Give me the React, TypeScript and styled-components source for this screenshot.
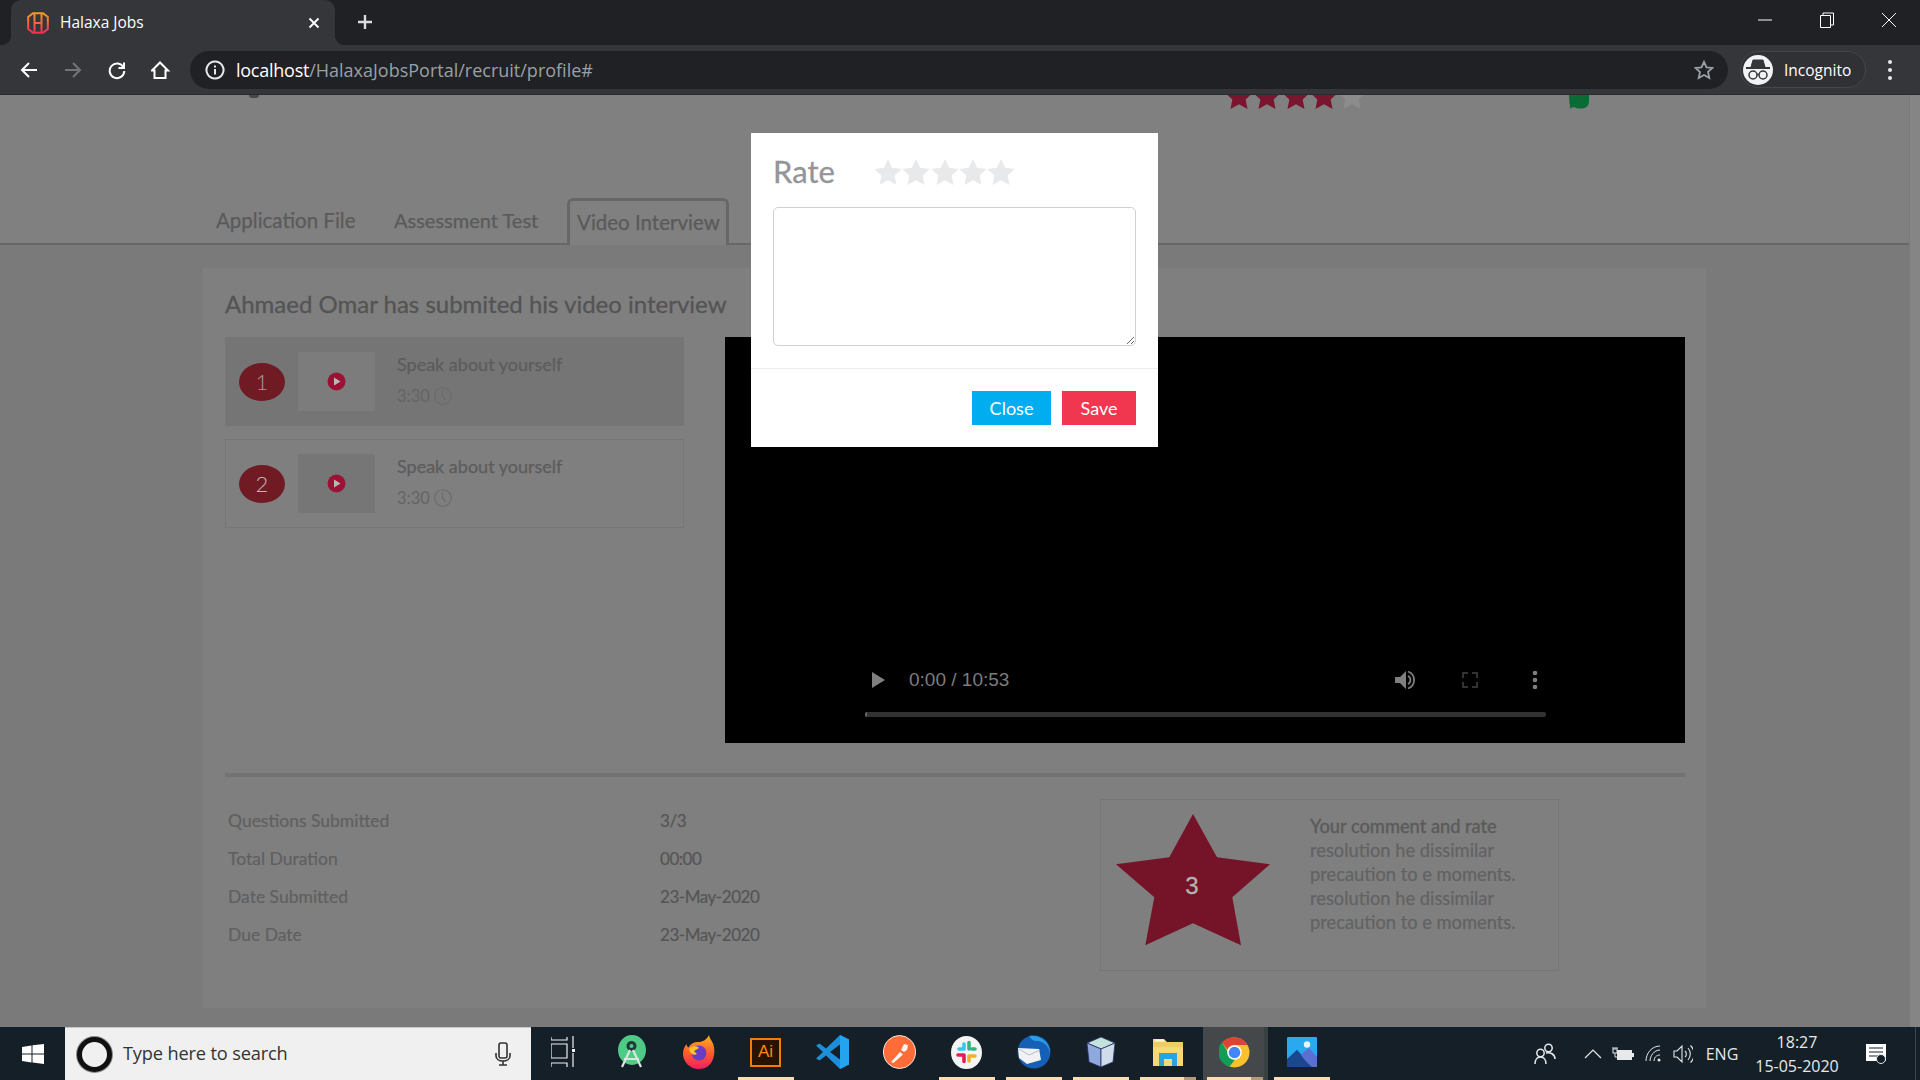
import React from "react";
import styled, { createGlobalStyle } from "styled-components";

const Global = createGlobalStyle`
  html, body { margin: 0; padding: 0; background: #808080; overflow: hidden; }
  * { box-sizing: border-box; }
`;

const BODY = `"Lato", "Open Sans", sans-serif`;
const UI = `"Open Sans", "Noto Sans", sans-serif`;

const Screen = styled.div`
  width: 1920px; height: 1080px; display: flex; flex-direction: column; overflow: hidden; font-family: ${BODY};
`;

/* ---------- browser chrome ---------- */
const TabStrip = styled.div`
  height: 45px; background: #202124; display: flex; align-items: stretch; padding-left: 11px; flex: none;
`;
const Tab = styled.div`
  position: relative; width: 324px; background: #35363a; border-radius: 10px 10px 0 0;
  display: flex; align-items: center; padding-left: 16px; gap: 11px;
  font: 15.5px ${UI}; color: #fff;
  &::before, &::after { content: ""; position: absolute; bottom: 0; width: 10px; height: 10px; }
  &::before { left: -10px; background: radial-gradient(circle at 0 0, #202124 10px, #35363a 10.5px); }
  &::after { right: -10px; background: radial-gradient(circle at 100% 0, #202124 10px, #35363a 10.5px); }
`;
const TabTitle = styled.span`flex: 1; padding-bottom: 2px;`;
const TabClose = styled.div`width: 42px; display: flex; justify-content: center; margin-right: 0;`;
const NewTab = styled.div`width: 60px; display: flex; align-items: center; justify-content: center; padding-bottom: 2px;`;
const WindowControls = styled.div`margin-left: auto; display: flex;`;
const WindowButton = styled.div`width: 62px; display: flex; align-items: center; justify-content: center; padding-bottom: 6px;`;

const Toolbar = styled.div`
  height: 50px; background: #35363a; display: flex; align-items: center; padding-left: 7px; flex: none;
  border-bottom: 1px solid #2b2b2b;
`;
const NavButton = styled.div`width: 44px; height: 40px; display: flex; align-items: center; justify-content: center;`;
const Omnibox = styled.div`
  width: 1538px; height: 38px; margin-left: 7px; background: #202124; border-radius: 19px;
  display: flex; align-items: center; padding: 0 14px 0 15px; gap: 11px; font: 18px ${UI}; color: #9aa0a6;
`;
const UrlHost = styled.span`color: #fff; letter-spacing: -0.25px;`;
const Url = styled.div`flex: 1;`;
const Incognito = styled.div`
  width: 126px; height: 37px; margin-left: 12px; border-radius: 19px; background: #303135; border: 1px solid #45464a;
  display: flex; align-items: center; padding-left: 2px; gap: 11px; font: 15.500px ${UI}; color: #fff;
`;
const Avatar = styled.div`
  width: 30px; height: 30px; border-radius: 50%; background: #f1f3f4; display: flex; align-items: center; justify-content: center;
`;
const MenuButton = styled.div`width: 48px; display: flex; justify-content: center;`;

/* ---------- page ---------- */
const Viewport = styled.div`flex: 1; position: relative; overflow: hidden; display: flex; min-height: 0; background: #808080;`;
const PageMain = styled.div`flex: 1; display: flex; flex-direction: column; min-width: 0;`;
const ScrollTrack = styled.div`width: 11px; background: #858585; border-left: 1px solid #7a7a7a;`;

const PeekRow = styled.div`height: 15px; padding-left: 249px; display: flex; overflow: hidden; flex: none;`;
const PeekDot = styled.div`width: 10px; height: 3px; border-radius: 0 0 5px 5px; background: #484848;`;
const PeekStars = styled.div`display: flex; margin-left: 966px; align-self: flex-end; gap: 0.3px; align-items: flex-end; height: 15px;`;
const PeekBubble = styled.div`margin-left: 203px; align-self: flex-start; display: flex;`;

const TabBar = styled.div`
  height: 135px; flex: none; border-bottom: 2px solid #676767; padding-left: 216px; display: flex; align-items: flex-end;
  font-size: 20.5px; color: #5a5a5a; -webkit-text-stroke: 0.25px #5a5a5a;
`;
const PlainTab = styled.div<{ $w: number; $size?: number }>`
  width: ${(p) => p.$w}px; padding-bottom: 11px; white-space: nowrap; font-size: ${(p) => p.$size ?? 20.5}px;
`;
const ActiveTab = styled.div`
  width: 162px; height: 47px; margin-bottom: -2px; border: 3px solid #676767; border-bottom: 0; border-radius: 6px 6px 0 0;
  padding-left: 7px; padding-top: 9px; white-space: nowrap; background: #808080; color: #5a5a5a;
`;

const Body = styled.div`flex: 1; background: #7a7a7a; padding: 23px 203px 19px; min-height: 0;`;
const Panel = styled.div`height: 740px; background: #7f7f7f; padding: 20px 21px 0 22px;`;
const Heading = styled.h2`
  margin: 0 0 17px; font-weight: 400; height: 32px; line-height: 32px; font-size: 24px; color: #545454; white-space: nowrap;
  -webkit-text-stroke: 0.3px #545454;
`;
const TopRow = styled.div`display: flex; justify-content: space-between; align-items: flex-start;`;
const QuestionList = styled.div`width: 459px; display: flex; flex-direction: column; gap: 13px;`;
const Question = styled.div<{ $active?: boolean }>`
  height: 89px; display: flex; align-items: center; padding-left: 13px;
  background: ${(p) => (p.$active ? "#757575" : "transparent")};
  border: 1px solid ${(p) => (p.$active ? "#757575" : "#767676")};
`;
const NumberBadge = styled.div<{ $active?: boolean }>`
  width: 46px; height: 38px; border-radius: 50%; background: #701a23; flex: none;
  display: flex; align-items: center; justify-content: center; font-size: 22px; font-weight: 300;
  color: ${(p) => (p.$active ? "#a89a9a" : "#c2b5b5")};
`;
const Thumb = styled.div<{ $active?: boolean }>`
  width: 77px; height: 59px; margin-left: 13px; flex: none; display: flex; align-items: center; justify-content: center;
  background: ${(p) => (p.$active ? "#7c7c7c" : "#767676")};
`;
const QuestionText = styled.div`margin-left: 22px; padding-bottom: 6px; display: flex; flex-direction: column; gap: 10px;`;
const QuestionTitle = styled.div`font-size: 18px; line-height: 24px; color: #5c5c5c; -webkit-text-stroke: 0.25px #5c5c5c;`;
const QuestionTime = styled.div`display: flex; align-items: center; gap: 4px; font-size: 16.5px; line-height: 20px; color: #646464;`;

const Video = styled.div`
  width: 960px; height: 406px; background: #000; display: flex; flex-direction: column; justify-content: flex-end;
  padding: 0 139px 26px 140px;
`;
const VideoControls = styled.div`height: 30px; margin-bottom: 17px; display: flex; align-items: center; padding-left: 7px;`;
const VideoTime = styled.div`margin-left: 24px; font: 19px "Liberation Sans", sans-serif; color: #7c7c7c;`;
const VideoRight = styled.div`margin-left: auto; display: flex; gap: 43px; align-items: center;`;
const VideoTrack = styled.div`height: 5px; background: #333; border-radius: 2px; border-left: 2px solid #666;`;

const Divider = styled.div`height: 4px; margin-top: 30px; background: #727272;`;
const BottomRow = styled.div`display: flex;`;
const Stats = styled.div`width: 875px; padding: 24px 0 0 3px;`;
const StatRow = styled.div`height: 38px; display: flex; align-items: center; font-size: 17.5px;`;
const StatLabel = styled.div`width: 432px; color: #606060; -webkit-text-stroke: 0.2px #606060;`;
const StatValue = styled.div`color: #555; font-size: 17px; letter-spacing: -0.45px; -webkit-text-stroke: 0.2px #555;`;

const CommentCard = styled.div`
  width: 459px; height: 172px; margin-top: 22px; border: 1px solid #767676; display: flex; padding: 14px 0 0 15px;
`;
const BigStar = styled.div`width: 154px; height: 132px; display: grid; place-items: center; flex: none;`;
const BigStarShape = styled.svg`grid-area: 1 / 1; width: 154px; height: 132px;`;
const BigStarNumber = styled.span`
  grid-area: 1 / 1; padding: 11px 2px 0 0; font: 24px "Liberation Sans", sans-serif; color: #b3b3b3; -webkit-text-stroke: 0.3px #b3b3b3;
`;
const CommentText = styled.div`margin-left: 40px; font-size: 18.3px; line-height: 24px; color: #626262; -webkit-text-stroke: 0.2px #626262; white-space: nowrap;`;
const CommentTitle = styled.div`color: #5a5a5a; -webkit-text-stroke: 0.35px #5a5a5a;`;

/* ---------- modal ---------- */
const Modal = styled.div`
  position: absolute; left: 751px; top: 38px; width: 407px; height: 314px; background: #fff; display: flex; flex-direction: column;
`;
const ModalBody = styled.div`padding: 25px 22px 22px; border-bottom: 1px solid #e9ecef;`;
const RateRow = styled.div`height: 28px; display: flex; align-items: center; margin-bottom: 21px;`;
const RateTitle = styled.div`width: 101px; padding-bottom: 2px; font-size: 31px; color: #939598; -webkit-text-stroke: 0.3px #939598;`;
const RateStars = styled.div`display: flex; gap: 0.3px; margin-top: -1px;`;
const Comment = styled.textarea`
  display: block; width: 363px; height: 139px; border: 1px solid #ced0d4; border-radius: 5px; outline: 0; background: #fff; margin: 0;
`;
const ModalFooter = styled.div`padding: 22px; display: flex; justify-content: flex-end; gap: 11px;`;
const ModalButton = styled.button<{ $bg: string; $w: number }>`
  width: ${(p) => p.$w}px; height: 34px; border: 0; background: ${(p) => p.$bg}; color: #fff; font: 18px ${BODY}; padding: 0;
`;

/* ---------- taskbar ---------- */
const Taskbar = styled.div`height: 53px; flex: none; display: flex; background: #141f27; position: relative;`;
const StartButton = styled.div`width: 65px; display: flex; align-items: center; justify-content: center; padding-top: 0;`;
const SearchBox = styled.div`
  width: 466px; background: #f0f0f0; border-top: 1px solid #c8c8c8; display: flex; align-items: center; padding-left: 12px;
  font: 18.200px ${UI}; color: #333;
`;
const Cortana = styled.div`
  width: 35px; height: 35px; border-radius: 50%; border: 5px solid #111; box-shadow: 0 0 0 1px #888; background: #f0f0f0; margin-right: 11px; flex: none;
`;
const SearchLabel = styled.span`flex: 1; letter-spacing: -0.15px; padding-bottom: 2px;`;
const SearchMic = styled.div`width: 56px; display: flex; justify-content: center;`;
const Slot = styled.div<{ $active?: boolean }>`
  width: 67px; display: flex; flex-direction: column; align-items: center;
  background: ${(p) => (p.$active ? "linear-gradient(90deg, transparent 2px, #44484b 2px, #44484b 63px, #3a3f42 63px)" : "transparent")};
`;
const SlotIcon = styled.div<{ $nudge?: number }>`
  flex: 1; display: flex; align-items: center; justify-content: center; padding-right: ${(p) => p.$nudge ?? 0}px;
`;
const SlotMark = styled.div<{ $on?: boolean; $stacked?: boolean }>`
  width: 56px; height: 3px; flex: none;
  background: ${(p) =>
    !p.$on ? "transparent" : p.$stacked ? "linear-gradient(90deg, #fbdcb3 79%, #b49a78 79%)" : "#fbdcb3"};
`;
const Tray = styled.div`margin-left: auto; display: flex; width: 399px; color: #e6e8ea; font: 16px ${UI};`;
const TrayItem = styled.div<{ $w: number; $ml?: number }>`
  width: ${(p) => p.$w}px; margin-left: ${(p) => p.$ml ?? 0}px; display: flex; align-items: center; justify-content: center;
`;
const Clock = styled.div`display: flex; flex-direction: column; align-items: center; font-size: 16px; line-height: 24px;`;
const ShowDesktop = styled.div`width: 5px; margin-left: 9px; border-left: 1px solid #3b4650;`;

/* ---------- icons ---------- */
const STAR = "M12 .8l3.5 7.6 8.2 1-6 5.6 1.6 8.2L12 19.1l-7.3 4.1 1.6-8.2-6-5.6 8.2-1z";
const Star = ({ fill, size = 28 }: { fill: string; size?: number }) => (
  <svg width={size} height={size} viewBox="0 0 24 24" style={{ flex: "none", display: "block" }}><path d={STAR} fill={fill} /></svg>
);
const Favicon = () => (
  <svg width="22" height="22" viewBox="0 0 22 22" fill="none">
    <defs><linearGradient id="fav" x1="0" y1="0" x2="0" y2="1"><stop offset="0" stopColor="#f59a23" /><stop offset="1" stopColor="#f22f55" /></linearGradient></defs>
    <path d="M6 1.200h10L20.800 5v12L16 20.800H6L1.200 17V5zM7.500 2v18M14.500 2v18M7.500 11h7" stroke="url(#fav)" strokeWidth="2" />
  </svg>
);
const Line = ({ d, c = "#fff", w = 2, s = 20 }: { d: string; c?: string; w?: number; s?: number }) => (
  <svg width={s} height={s} viewBox="0 0 20 20" fill="none" stroke={c} strokeWidth={w}><path d={d} /></svg>
);
const Dots = ({ c = "#e8eaed" }: { c?: string }) => (
  <svg width="6" height="22" viewBox="0 0 6 22" fill={c}><circle cx="3" cy="3" r="2" /><circle cx="3" cy="11" r="2" /><circle cx="3" cy="19" r="2" /></svg>
);
const PlayIcon = () => (
  <svg width="19" height="19" viewBox="0 0 19 19"><circle cx="9.500" cy="9.500" r="9" fill="#9c1235" /><path d="M7 5.500l6.500 4-6.500 4z" fill="#b9b9b9" /></svg>
);
const ClockIcon = () => (
  <svg width="18" height="18" viewBox="0 0 18 18" fill="none" stroke="#6a6a6a" strokeWidth="1.100"><circle cx="9" cy="9" r="8.300" /><path d="M8.500 3.500v5.500l3 4" /></svg>
);
const AndroidStudio = () => (
  <svg width="32" height="34" viewBox="0 0 32 34">
    <ellipse cx="16" cy="15" rx="14" ry="15" fill="#4fcb85" />
    <circle cx="15.500" cy="11" r="5" fill="#1d3b39" /><circle cx="15.500" cy="11" r="2" fill="#4fcb85" />
    <path d="M14 15L6 32M17 15l8 17M8 24h15" stroke="#d7e6e0" strokeWidth="2.200" fill="none" />
  </svg>
);
const Firefox = () => (
  <svg width="32" height="34" viewBox="0 0 32 34">
    <defs><linearGradient id="ff" x1="0" y1="0" x2="0" y2="1"><stop offset="0" stopColor="#ffb320" /><stop offset=".55" stopColor="#ff5a2c" /><stop offset="1" stopColor="#f21d62" /></linearGradient></defs>
    <path d="M26 0c.5 4 3 5 4.500 10 2 6 1.500 24-14.500 24C6 34 0 26 0 19c0-5 2-8 3.500-10 0 2 1 3 2 3.500C8 8 12 6.500 17 7c3-.5 7-2.500 9-7z" fill="url(#ff)" />
    <circle cx="16" cy="18" r="7.500" fill="#6a3bc4" />
    <path d="M6 14c3-4 9-3 10-1l-5 3 3 3c-3 2-7 0-8-5z" fill="#ffc22e" />
  </svg>
);
const AiBox = styled.div`width: 31px; height: 29px; background: #2a1200; border: 2px solid #f57c00; display: flex; align-items: center; justify-content: center;`;
const AiText = styled.span`font: 17px "Liberation Sans", sans-serif; color: #f98a12;`;
const Illustrator = () => <AiBox><AiText>Ai</AiText></AiBox>;
const VSCode = () => (
  <svg width="33" height="34" viewBox="0 0 33 34">
    <path d="M24 0l9 4.500v25L24 34 10 20.500 3.500 25.500 0 23.500 7 17 0 10.500l3.500-2L10 13.500z" fill="#1c8fd8" />
    <path d="M24 9.500L14 17l10 7.500z" fill="#141f27" /><path d="M24 0l9 4.500v25L24 34z" fill="#24a4ee" />
  </svg>
);
const Postman = () => (
  <svg width="33" height="34" viewBox="0 0 33 34">
    <ellipse cx="16.500" cy="17" rx="16" ry="16.500" fill="#ff6c37" stroke="#f5e8e0" strokeWidth="1" />
    <path d="M8 27l9-10 3 2.500-9.500 8.500zM18 15l3-6 4 1-1 5-3 2z" fill="#fff" opacity=".92" />
  </svg>
);
const Slack = () => (
  <svg width="31" height="33" viewBox="0 0 31 33">
    <ellipse cx="15.500" cy="16.500" rx="15.500" ry="16.500" fill="#f4f4f4" />
    <g strokeWidth="3.600" strokeLinecap="round" fill="none">
      <path d="M13 8v5M8 13h3" stroke="#36c5f0" /><path d="M18 6.500V13M21 13h3" stroke="#2eb67d" />
      <path d="M18 25v-5M20 20h4" stroke="#ecb22e" /><path d="M13 19h-6M13 19v6.500" stroke="#e01e5a" />
    </g>
  </svg>
);
const Thunderbird = () => (
  <svg width="34" height="34" viewBox="0 0 34 34">
    <circle cx="17" cy="17" r="16.500" fill="#1560b5" /><path d="M12 1c12-2 22 8 21 17-1-7-7-12-12-12S14 4 12 1z" fill="#2a9be8" />
    <path d="M1 13l21 1 2 11-14 4-8-6z" fill="#f1f1f4" /><path d="M2 14l10 6 11-5" stroke="#b6bcc8" fill="none" />
  </svg>
);
const Cube = () => (
  <svg width="30" height="32" viewBox="0 0 30 32" stroke="#2a3066" strokeWidth=".8">
    <path d="M15 1l14 6-14 6L1 7z" fill="#c3e2dc" /><path d="M1 7l14 6v18L3 26z" fill="#8fa9dc" /><path d="M29 7l-14 6v18l12-5z" fill="#cfdcea" />
  </svg>
);
const Folder = () => (
  <svg width="30" height="30" viewBox="0 0 30 30">
    <path d="M0 2h11l3 3h16v24H0z" fill="#f8d775" /><path d="M0 5h30V10H0z" fill="#e8c15a" opacity=".5" /><path d="M2 2.500h9v2H2z" fill="#fff6d0" />
    <path d="M6 16h18v13h-5v-7h-8v7H6z" fill="#2ba3dc" />
  </svg>
);
const ChromeIcon = () => (
  <svg width="31" height="31" viewBox="0 0 32 32">
    <circle cx="16" cy="16" r="15.500" fill="#fbc02d" />
    <path d="M16 .5A15.500 15.500 0 0 1 29.400 8.200H16A8 8 0 0 0 8.700 12.800L3 5.500A15.500 15.500 0 0 1 16 .5z" fill="#db4437" />
    <path d="M3 5.500L9.400 16a7.500 7.500 0 0 0 7 7.500l-5.600 7.100A15.500 15.500 0 0 1 3 5.500z" fill="#0f9d58" />
    <circle cx="16" cy="16" r="7.500" fill="#fff" /><circle cx="16" cy="16" r="6" fill="#4285f4" />
  </svg>
);
const Photos = () => (
  <svg width="30" height="30" viewBox="0 0 30 30">
    <rect width="30" height="30" rx="1" fill="#29a9ef" /><circle cx="20" cy="7.500" r="3.200" fill="#e5f3fb" />
    <path d="M0 23l10-10 9 9 11 0v8H0z" fill="#1c4f96" /><path d="M17 15l5-4 8 9v10h-5L13 19z" fill="#5a6fd0" /><path d="M0 22l10-9 13 17H0z" fill="#19488e" />
  </svg>
);

const questions = [{ n: 1, active: true }, { n: 2, active: false }];
const stats = [
  ["Questions Submitted", "3/3"],
  ["Total Duration", "00:00"],
  ["Date Submitted", "23-May-2020"],
  ["Due Date", "23-May-2020"],
];
const apps: { icon: React.ReactNode; open?: boolean; active?: boolean; stacked?: boolean }[] = [
  { icon: <AndroidStudio /> },
  { icon: <Firefox /> },
  { icon: <Illustrator />, open: true },
  { icon: <VSCode /> },
  { icon: <Postman /> },
  { icon: <Slack />, open: true },
  { icon: <Thunderbird />, open: true },
  { icon: <Cube />, open: true },
  { icon: <Folder />, open: true, stacked: true },
  { icon: <ChromeIcon />, open: true, active: true, stacked: true },
  { icon: <Photos />, open: true },
];

export default function App() {
  return (
    <Screen>
      <Global />
      <TabStrip>
        <Tab>
          <Favicon />
          <TabTitle>Halaxa Jobs</TabTitle>
          <TabClose><Line d="M5 5l10 10M15 5L5 15" w={2} s={18} /></TabClose>
        </Tab>
        <NewTab><Line d="M10 3v14M3 10h14" c="#dadce0" w={2.400} /></NewTab>
        <WindowControls>
          <WindowButton><Line d="M3 10h14" w={1} /></WindowButton>
          <WindowButton><Line d="M3.500 5.500h10v12h-10zM6 5.500V3h10.500v12h-3" w={1} /></WindowButton>
          <WindowButton><Line d="M3 3l14 14M17 3L3 17" w={1} /></WindowButton>
        </WindowControls>
      </TabStrip>
      <Toolbar>
        <NavButton><Line d="M18 10H3M10 3l-7 7 7 7" w={2} /></NavButton>
        <NavButton><Line d="M2 10h15M10 3l7 7-7 7" c="#73757a" w={2} /></NavButton>
        <NavButton><Line d="M16.500 7.500A7.300 7.300 0 1 0 17.300 11M17 2.500V8h-5.500" w={2} /></NavButton>
        <NavButton><Line d="M9 2.500L1 10.500h2.500V18h11v-7.500H17z" w={2} /></NavButton>
        <Omnibox>
          <Line d="M10 1.500a8.500 8.500 0 1 0 .01 0zM10 9v5.500M10 5.500v2" c="#e8eaed" w={2} />
          <Url><UrlHost>localhost</UrlHost>/HalaxaJobsPortal/recruit/profile#</Url>
          <Line d="M10 1.800l2.500 5.500 6 .6-4.500 4 1.300 6L10 15l-5.300 3 1.300-6-4.500-4 6-.6z" c="#9aa0a6" w={1.800} />
        </Omnibox>
        <Incognito>
          <Avatar>
            <svg width="26" height="24" viewBox="0 0 26 24" fill="none" stroke="#35363a">
              <path d="M8 2h10l2 7H6z" fill="#35363a" /><path d="M1 10h24" strokeWidth="2" />
              <circle cx="8" cy="17" r="4" strokeWidth="1.500" /><circle cx="18" cy="17" r="4" strokeWidth="1.500" /><path d="M12 16.500h2" strokeWidth="1.500" />
            </svg>
          </Avatar>
          Incognito
        </Incognito>
        <MenuButton><Dots /></MenuButton>
      </Toolbar>

      <Viewport>
        <PageMain>
          <PeekRow>
            <PeekDot />
            <PeekStars>
              {["#7a1530", "#7a1530", "#7a1530", "#7a1530", "#8c8c8c"].map((c, i) => <Star key={i} fill={c} />)}
            </PeekStars>
            <PeekBubble>
              <svg width="20" height="14" viewBox="0 0 20 14"><path d="M0 0h20v6c0 5-3 7.500-8 7.500-3 0-5-.5-7-1.500L.5 13.500c1-2 .5-3 0-5z" fill="#0a6b35" /></svg>
            </PeekBubble>
          </PeekRow>
          <TabBar>
            <PlainTab $w={178}>Application File</PlainTab>
            <PlainTab $w={173} $size={20}>Assessment Test</PlainTab>
            <ActiveTab>Video Interview</ActiveTab>
          </TabBar>
          <Body>
            <Panel>
              <Heading>Ahmaed Omar has submited his video interview</Heading>
              <TopRow>
                <QuestionList>
                  {questions.map((q) => (
                    <Question key={q.n} $active={q.active}>
                      <NumberBadge $active={q.active}>{q.n}</NumberBadge>
                      <Thumb $active={q.active}><PlayIcon /></Thumb>
                      <QuestionText>
                        <QuestionTitle>Speak about yourself</QuestionTitle>
                        <QuestionTime>3:30 <ClockIcon /></QuestionTime>
                      </QuestionText>
                    </Question>
                  ))}
                </QuestionList>
                <Video>
                  <VideoControls>
                    <svg width="13" height="16" viewBox="0 0 13 16"><path d="M0 0l13 8-13 8z" fill="#7f7f7f" /></svg>
                    <VideoTime>0:00 / 10:53</VideoTime>
                    <VideoRight>
                      <svg width="22" height="22" viewBox="0 0 22 22"><path d="M1 8h5l6-6v18l-6-6H1z" fill="#7f7f7f" /><path d="M14 2.500a9 9 0 0 1 0 17M14 7a4.500 4.500 0 0 1 0 8" fill="none" stroke="#7f7f7f" strokeWidth="1.800" /></svg>
                      <svg width="22" height="22" viewBox="0 0 22 22" fill="none" stroke="#333" strokeWidth="2"><path d="M4 9V4h5M13 4h5v5M18 13v5h-5M9 18H4v-5" /></svg>
                      <svg width="22" height="22" viewBox="0 0 22 22" fill="#7f7f7f"><circle cx="11" cy="4" r="2.300" /><circle cx="11" cy="11" r="2.300" /><circle cx="11" cy="18" r="2.300" /></svg>
                    </VideoRight>
                  </VideoControls>
                  <VideoTrack />
                </Video>
              </TopRow>
              <Divider />
              <BottomRow>
                <Stats>
                  {stats.map(([k, v]) => (
                    <StatRow key={k}><StatLabel>{k}</StatLabel><StatValue>{v}</StatValue></StatRow>
                  ))}
                </Stats>
                <CommentCard>
                  <BigStar>
                    <BigStarShape viewBox="0 0 154 132">
                      <path d="M77 0L101 43.300 154 50.300 116.300 83.300 125 131.300 77 109.300 29.300 131.300 38.300 83.300 0 50.300 53.300 43.300z" fill="#751428" />
                    </BigStarShape>
                    <BigStarNumber>3</BigStarNumber>
                  </BigStar>
                  <CommentText>
                    <CommentTitle>Your comment and rate</CommentTitle>
                    <div>resolution he dissimilar</div>
                    <div>precaution to e moments.</div>
                    <div>resolution he dissimilar</div>
                    <div>precaution to e moments.</div>
                  </CommentText>
                </CommentCard>
              </BottomRow>
            </Panel>
          </Body>
        </PageMain>
        <ScrollTrack />
        <Modal>
          <ModalBody>
            <RateRow>
              <RateTitle>Rate</RateTitle>
              <RateStars>{[0, 1, 2, 3, 4].map((i) => <Star key={i} fill="#e8e9eb" />)}</RateStars>
            </RateRow>
            <Comment />
          </ModalBody>
          <ModalFooter>
            <ModalButton $bg="#00aeef" $w={79}>Close</ModalButton>
            <ModalButton $bg="#f1364f" $w={74}>Save</ModalButton>
          </ModalFooter>
        </Modal>
      </Viewport>

      <Taskbar>
        <StartButton>
          <svg width="22" height="20" viewBox="0 0 22 20" fill="#fff"><path d="M0 3l9.500-1.500V9.500H0zM10.500 1.300L22 0v9.500H10.500zM0 10.500h9.500v8L0 17zM10.500 10.500H22V20l-11.500-1.500z" /></svg>
        </StartButton>
        <SearchBox>
          <Cortana />
          <SearchLabel>Type here to search</SearchLabel>
          <SearchMic>
            <svg width="16" height="24" viewBox="0 0 16 24" fill="none" stroke="#333" strokeWidth="1.600"><rect x="4" y="1" width="8" height="15" rx="2" /><path d="M1 11v3c0 3 3 5 7 5s7-2 7-5v-3M8 19v4M4 23h8" /></svg>
          </SearchMic>
        </SearchBox>
        <Slot>
          <SlotIcon $nudge={4}>
            <svg width="24" height="32" viewBox="0 0 24 32" fill="none" stroke="#f0f2f4" strokeWidth="1.200"><path d="M0 1v3h16V1M0 8h16v14H0zM0 31v-4h16v4M22 0v12M22 17v14" /><rect x="21" y="13" width="3" height="3" fill="#f0f2f4" stroke="none" /></svg>
          </SlotIcon>
          <SlotMark />
        </Slot>
        {apps.map((a, i) => (
          <Slot key={i} $active={a.active}>
            <SlotIcon>{a.icon}</SlotIcon>
            <SlotMark $on={a.open} $stacked={a.stacked} />
          </Slot>
        ))}
        <Tray>
          <TrayItem $w={48}>
            <svg width="22" height="22" viewBox="0 0 22 22" fill="none" stroke="#e6e8ea" strokeWidth="1.500"><circle cx="14.500" cy="5" r="3.700" /><circle cx="6.500" cy="10" r="3.700" /><path d="M1 21c0-4 2-7 5.500-7s5.500 3 5.500 7M12 10c4-1 9 1 9 6" /></svg>
          </TrayItem>
          <TrayItem $w={34} $ml={7}><Line d="M2 14l8-8 8 8" c="#e6e8ea" w={1.200} /></TrayItem>
          <TrayItem $w={26}>
            <svg width="22" height="14" viewBox="0 0 22 14"><rect x="5" y="3" width="15" height="10" fill="#e6e8ea" /><rect x="20" y="6" width="2" height="4" fill="#e6e8ea" /><rect x="1" y="2" width="4" height="4" fill="none" stroke="#e6e8ea" /><path d="M3 6v4h2M0 1h6" stroke="#e6e8ea" /></svg>
          </TrayItem>
          <TrayItem $w={34}>
            <svg width="17" height="17" viewBox="0 0 17 17" fill="none" stroke="#e6e8ea"><path d="M1 16C1 8 7 1 15 1M5 16c0-5 4-11 10-11M9 16c0-3 2-6 6-6" /><circle cx="14" cy="15" r="1.500" fill="#e6e8ea" stroke="none" /></svg>
          </TrayItem>
          <TrayItem $w={26}>
            <svg width="20" height="20" viewBox="0 0 20 20" fill="none" stroke="#e6e8ea" strokeWidth="1.100"><path d="M1 7h3l5-5v16l-5-5H1zM12 7a4 4 0 0 1 0 6M15 4a9 9 0 0 1 0 12M17.500 1.500a12 12 0 0 1 0 17" /></svg>
          </TrayItem>
          <TrayItem $w={52}>ENG</TrayItem>
          <TrayItem $w={98}><Clock><span>18:27</span><span>15-05-2020</span></Clock></TrayItem>
          <TrayItem $w={60}>
            <svg width="21" height="20" viewBox="0 0 21 20"><path d="M0 0h20v17H0z" fill="#fff" /><path d="M3 4h14M3 8h14M3 12h9" stroke="#141f27" /><circle cx="15" cy="15" r="4.500" fill="#141f27" stroke="#e6e8ea" /></svg>
          </TrayItem>
          <ShowDesktop />
        </Tray>
      </Taskbar>
    </Screen>
  );
}
